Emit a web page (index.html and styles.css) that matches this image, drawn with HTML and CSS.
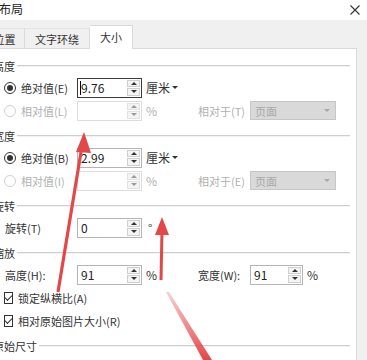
FILE: index.html
```html
<!DOCTYPE html>
<html lang="zh-CN">
<head>
    <meta charset="UTF-8">
    <title>布局</title>
    <link rel="stylesheet" href="styles.css">
</head>
<body>
    <div class="dialog">
        <div class="titlebar">
            <span class="title">布局</span>
            <svg class="close" width="10" height="10" viewBox="0 0 10 10">
                <path d="M0.5 0.5 L9.5 9.5 M9.5 0.5 L0.5 9.5" stroke="#333" stroke-width="1.1" fill="none"/>
            </svg>
        </div>

        <div class="tabs">
            <div class="tab tab-pos">位置</div>
            <div class="tab tab-wrap">文字环绕</div>
            <div class="tab tab-size active">大小</div>
        </div>

        <div class="panel">
            <!-- 高度 -->
            <div class="section">
                <div class="legend"><span>高度</span><i></i></div>
                <div class="row">
                    <label class="opt"><span class="radio on"></span>绝对值(E)</label>
                    <div class="spin focus"><span class="caret"></span><span class="val">9.76</span><span class="arrows"><b class="up"></b><b class="down"></b></span></div>
                    <span class="unit">厘米<em class="drop"></em></span>
                </div>
                <div class="row off">
                    <label class="opt"><span class="radio"></span>相对值(L)</label>
                    <div class="spin"><span class="val"></span><span class="arrows"><b class="up"></b><b class="down"></b></span></div>
                    <span class="unit">%</span>
                    <span class="rel">相对于(T)</span>
                    <div class="select">页面<em class="drop"></em></div>
                </div>
            </div>

            <!-- 宽度 -->
            <div class="section">
                <div class="legend"><span>宽度</span><i></i></div>
                <div class="row">
                    <label class="opt"><span class="radio on"></span>绝对值(B)</label>
                    <div class="spin"><span class="val">2.99</span><span class="arrows"><b class="up"></b><b class="down"></b></span></div>
                    <span class="unit">厘米<em class="drop"></em></span>
                </div>
                <div class="row off">
                    <label class="opt"><span class="radio"></span>相对值(I)</label>
                    <div class="spin"><span class="val"></span><span class="arrows"><b class="up"></b><b class="down"></b></span></div>
                    <span class="unit">%</span>
                    <span class="rel">相对于(E)</span>
                    <div class="select">页面<em class="drop"></em></div>
                </div>
            </div>

            <!-- 旋转 -->
            <div class="section">
                <div class="legend"><span>旋转</span><i></i></div>
                <div class="row">
                    <label class="opt plain">旋转(T)</label>
                    <div class="spin"><span class="val">0</span><span class="arrows"><b class="up"></b><b class="down"></b></span></div>
                    <span class="unit deg">°</span>
                </div>
            </div>

            <!-- 缩放 -->
            <div class="section">
                <div class="legend"><span>缩放</span><i></i></div>
                <div class="row">
                    <label class="opt plain">高度(H):</label>
                    <div class="spin"><span class="val">91</span><span class="arrows"><b class="up"></b><b class="down"></b></span></div>
                    <span class="unit">%</span>
                    <span class="rel">宽度(W):</span>
                    <div class="spin small"><span class="val">91</span><span class="arrows"><b class="up"></b><b class="down"></b></span></div>
                    <span class="unit">%</span>
                </div>
                <div class="row">
                    <label class="opt"><span class="check"></span>锁定纵横比(A)</label>
                </div>
                <div class="row">
                    <label class="opt"><span class="check"></span>相对原始图片大小(R)</label>
                </div>
            </div>

            <div class="section">
                <div class="legend"><span>原始尺寸</span><i></i></div>
            </div>
        </div>
    </div>

    <svg class="marks" width="367" height="360" viewBox="0 0 367 360">
        <defs>
            <linearGradient id="fade" x1="0" y1="0" x2="0" y2="1">
                <stop offset="0" stop-color="#e2474a" stop-opacity="0.25"/>
                <stop offset="1" stop-color="#e2474a" stop-opacity="1"/>
            </linearGradient>
        </defs>
        <line x1="58" y1="292" x2="82" y2="146" stroke="#e2474a" stroke-width="3.2"/>
        <polygon points="84,132 76,152 91,153" fill="#e2474a"/>
        <line x1="161" y1="280" x2="162" y2="230" stroke="#e2474a" stroke-width="3"/>
        <polygon points="162,217 155,235 169,235" fill="#e2474a"/>
        <polygon points="166,292 169,292 212,360 203,360" fill="url(#fade)"/>
    </svg>
</body>
</html>
```

FILE: styles.css
```css
body {
    margin: 0;
    width: 367px;
    height: 360px;
    overflow: hidden;
    position: relative;
    background-color: #f0f0f0;
    font-family: "Noto Sans CJK SC", "Noto Sans", sans-serif;
    font-size: 11px;
    color: #333;
}

.dialog {
    width: 367px;
}

.titlebar {
    height: 20px;
    background-color: #ffffff;
    display: flex;
    align-items: center;
    justify-content: space-between;
}

.title {
    font-size: 12px;
    line-height: 17px;
    margin-left: -1px;
    margin-top: -3px;
    color: #222;
}

.close {
    margin-right: 7px;
    margin-top: -1px;
}

.tabs {
    width: 357px;
    height: 28px;
    display: flex;
    align-items: flex-end;
    border-bottom: 1px solid #d9d9d9;
    margin-left: -15px;
    padding-right: 15px;
    box-sizing: content-box;
}

.tab {
    height: 20px;
    line-height: 20px;
    text-align: center;
    box-sizing: border-box;
    border-right: 1px solid #d9d9d9;
    border-top: 1px solid #e4e4e4;
    color: #333;
}

.tab-pos {
    width: 40px;
}

.tab-wrap {
    width: 65px;
}

.tab-size {
    width: 43px;
}

.tab.active {
    height: 24px;
    line-height: 22px;
    margin-bottom: -1px;
    background-color: #ffffff;
    border: 1px solid #d9d9d9;
    border-bottom: none;
    border-left: none;
}

.panel {
    width: 357px;
    height: 320px;
    box-sizing: border-box;
    background-color: #ffffff;
    border-right: 1px solid #dcdcdc;
    padding-top: 10px;
}

.section {
    padding-bottom: 7px;
}

.legend {
    height: 14px;
    display: flex;
    align-items: center;
    margin-left: -7px;
    margin-right: 6px;
    margin-bottom: 3px;
}

.legend span {
    line-height: 14px;
}

.legend i {
    flex: 1;
    height: 0;
    margin-left: 2px;
    border-top: 1px solid #cfcfcf;
    border-bottom: 1px solid #f2f2f2;
}

.row {
    height: 23px;
    display: flex;
    align-items: center;
}

.opt {
    width: 77px;
    flex-shrink: 0;
    display: flex;
    align-items: center;
    white-space: nowrap;
    box-sizing: border-box;
    padding-left: 4px;
}

.opt.plain {
    padding-left: 5px;
}

.radio {
    width: 12px;
    height: 12px;
    box-sizing: border-box;
    border: 1px solid #333;
    border-radius: 50%;
    margin-right: 5px;
    display: flex;
    align-items: center;
    justify-content: center;
}

.radio.on::after {
    content: "";
    width: 6px;
    height: 6px;
    border-radius: 50%;
    background-color: #333;
}

.check {
    width: 12px;
    height: 12px;
    box-sizing: border-box;
    border: 1px solid #333;
    margin-right: 5px;
    display: flex;
    align-items: center;
    justify-content: center;
}

.check::after {
    content: "";
    width: 6px;
    height: 3px;
    border-left: 1px solid #333;
    border-bottom: 1px solid #333;
    transform: rotate(-45deg);
    margin-top: -2px;
}

.spin {
    width: 65px;
    height: 20px;
    box-sizing: border-box;
    border: 1px solid #b5b5b5;
    display: flex;
    align-items: center;
    flex-shrink: 0;
    background-color: #ffffff;
}

.spin.focus {
    border-color: #3a3a3a;
}

.spin.small {
    width: 53px;
}

.caret {
    width: 0;
    height: 14px;
    border-left: 1px solid #000;
    margin-left: 2px;
    margin-right: -3px;
}

.val {
    flex: 1;
    padding-left: 3px;
    font-size: 12px;
    color: #222;
}

.arrows {
    width: 13px;
    height: 16px;
    margin-right: 1px;
    display: flex;
    flex-direction: column;
    gap: 1px;
}

.arrows b {
    flex: 1;
    box-sizing: border-box;
    border: 1px solid #cfcfcf;
    background-color: #f4f4f4;
    display: flex;
    align-items: center;
    justify-content: center;
}

.arrows b::after {
    content: "";
    width: 0;
    height: 0;
    border-left: 3px solid transparent;
    border-right: 3px solid transparent;
}

.arrows .up::after {
    border-bottom: 3px solid #333;
}

.arrows .down::after {
    border-top: 3px solid #333;
}

.unit {
    width: 56px;
    flex-shrink: 0;
    padding-left: 4px;
    box-sizing: border-box;
    display: flex;
    align-items: center;
    font-size: 12px;
}

.unit.deg {
    padding-left: 6px;
}

.drop {
    width: 0;
    height: 0;
    margin-left: 2px;
    border-left: 3px solid transparent;
    border-right: 3px solid transparent;
    border-top: 3px solid #333;
}

.rel {
    width: 52px;
    flex-shrink: 0;
    white-space: nowrap;
}

.select {
    width: 86px;
    height: 19px;
    box-sizing: border-box;
    border: 1px solid #c6c6c6;
    background-color: #d9d9d9;
    display: flex;
    align-items: center;
    justify-content: space-between;
    padding: 0 5px 0 4px;
    color: #a8a8a8;
}

.select .drop {
    border-top-color: #a8a8a8;
}

.row.off {
    color: #b0b0b0;
}

.row.off .radio {
    border-color: #d0d0d0;
}

.row.off .spin {
    border-color: #dddddd;
}

.row.off .arrows b {
    border-color: #e2e2e2;
}

.row.off .arrows .up::after {
    border-bottom-color: #9a9a9a;
}

.row.off .arrows .down::after {
    border-top-color: #9a9a9a;
}

.marks {
    position: absolute;
    top: 0;
    left: 0;
    pointer-events: none;
}
```
